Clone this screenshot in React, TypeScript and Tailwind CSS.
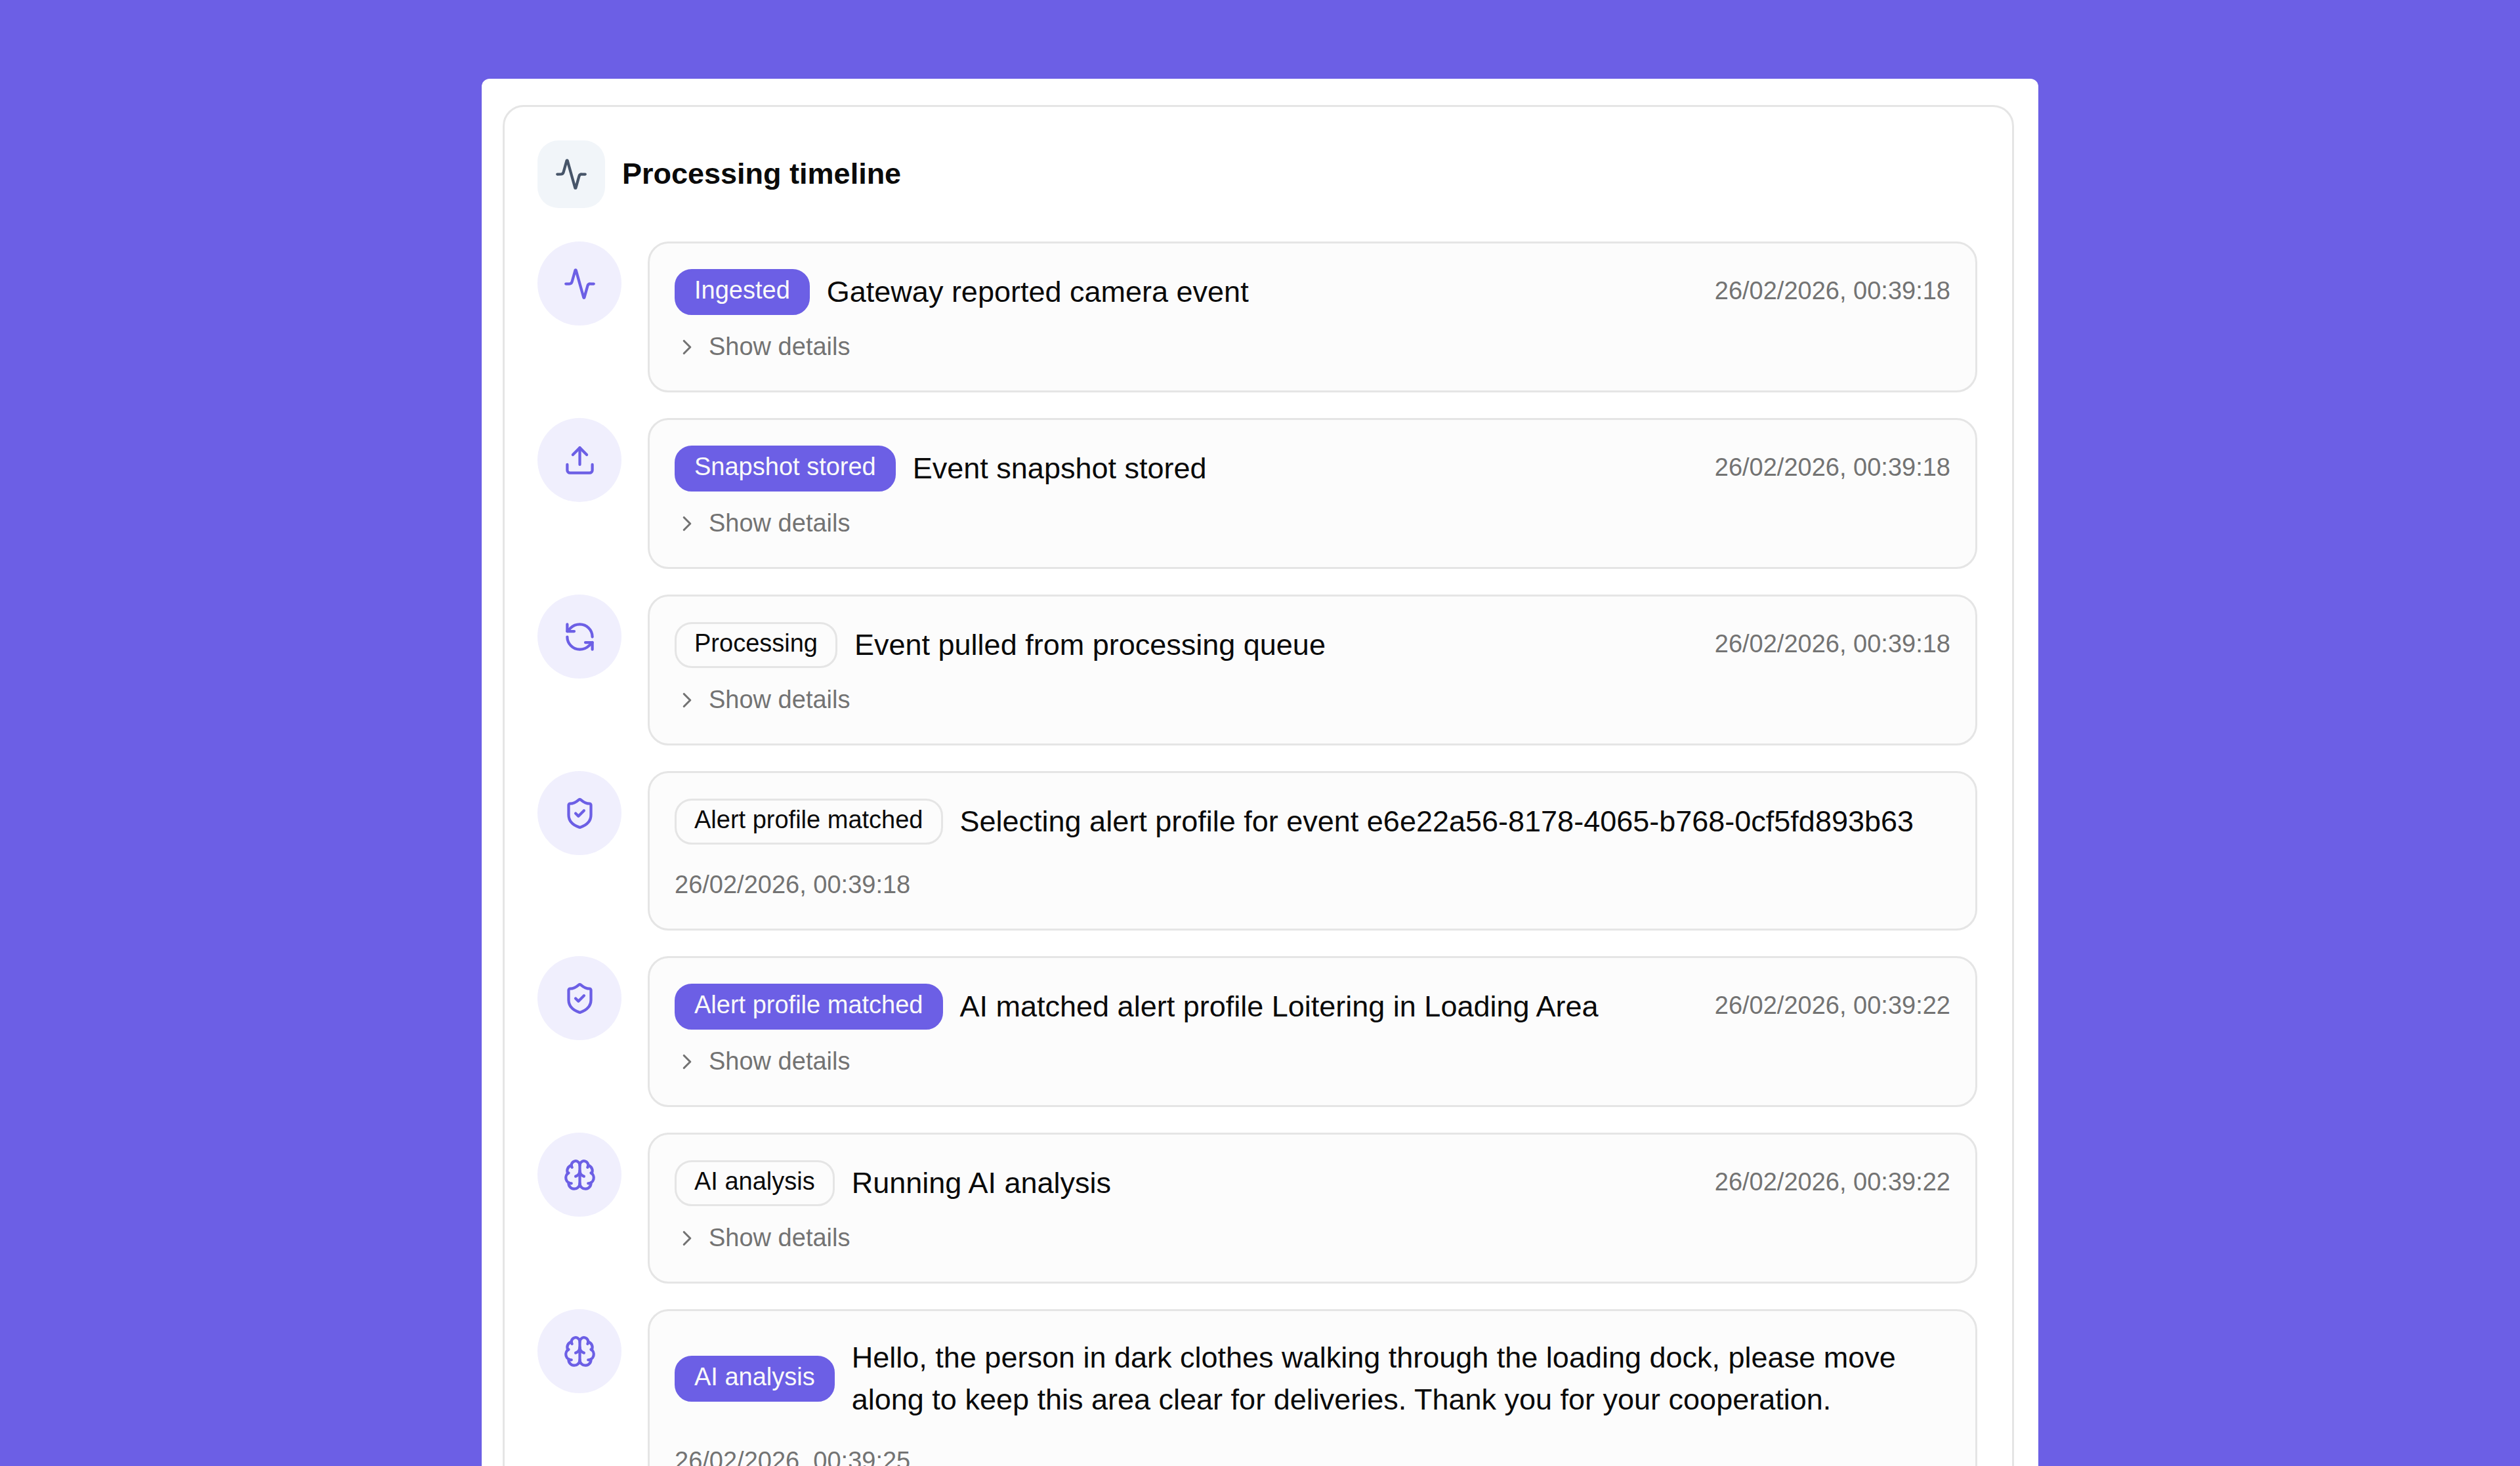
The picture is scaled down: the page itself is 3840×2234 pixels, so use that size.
import { Activity, Brain, ChevronRight, RefreshCcw, ShieldCheck, Upload, type LucideIcon } from 'lucide-react';
import clsx from 'clsx';

type TimelineEvent = {
  icon: LucideIcon;
  stage: string;
  done: boolean;
  message: string;
  timestamp: string;
  hasDetails: boolean;
};

const events: TimelineEvent[] = [
  {
    icon: Activity,
    stage: 'Ingested',
    done: true,
    message: 'Gateway reported camera event',
    timestamp: '26/02/2026, 00:39:18',
    hasDetails: true,
  },
  {
    icon: Upload,
    stage: 'Snapshot stored',
    done: true,
    message: 'Event snapshot stored',
    timestamp: '26/02/2026, 00:39:18',
    hasDetails: true,
  },
  {
    icon: RefreshCcw,
    stage: 'Processing',
    done: false,
    message: 'Event pulled from processing queue',
    timestamp: '26/02/2026, 00:39:18',
    hasDetails: true,
  },
  {
    icon: ShieldCheck,
    stage: 'Alert profile matched',
    done: false,
    message: 'Selecting alert profile for event e6e22a56-8178-4065-b768-0cf5fd893b63',
    timestamp: '26/02/2026, 00:39:18',
    hasDetails: false,
  },
  {
    icon: ShieldCheck,
    stage: 'Alert profile matched',
    done: true,
    message: 'AI matched alert profile Loitering in Loading Area',
    timestamp: '26/02/2026, 00:39:22',
    hasDetails: true,
  },
  {
    icon: Brain,
    stage: 'AI analysis',
    done: false,
    message: 'Running AI analysis',
    timestamp: '26/02/2026, 00:39:22',
    hasDetails: true,
  },
  {
    icon: Brain,
    stage: 'AI analysis',
    done: true,
    message:
      'Hello, the person in dark clothes walking through the loading dock, please move along to keep this area clear for deliveries. Thank you for your cooperation.',
    timestamp: '26/02/2026, 00:39:25',
    hasDetails: false,
  },
];

function StageBadge({ label, done }: { label: string; done: boolean }) {
  return (
    <span
      className={clsx(
        'shrink-0 whitespace-nowrap rounded-[26px] border-3 px-[27px] pt-1 pb-[9px] text-[38px] leading-[51px]',
        done ? 'border-[#6c5fe5] bg-[#6c5fe5] text-[#fafafa]' : 'border-[#e5e5e5] text-[#0a0a0a]'
      )}
    >
      {label}
    </span>
  );
}

function TimelineItem({ event }: { event: TimelineEvent }) {
  const Icon = event.icon;

  return (
    <li className="flex items-start gap-10">
      <div className="flex size-32 shrink-0 items-center justify-center rounded-full bg-[#f0effd] text-[#6c5fe5]">
        <Icon className="size-[51px]" />
      </div>

      <div className="min-w-0 flex-1 rounded-[32px] border-3 border-[#e5e5e5] bg-[#fcfcfc] px-[38px] py-[39px]">
        <div className="flex flex-wrap items-center justify-between gap-[38px]">
          <div className="flex items-center gap-[26px]">
            <StageBadge label={event.stage} done={event.done} />
            <p className="text-[45px] leading-[64px] text-[#0a0a0a]">{event.message}</p>
          </div>
          <time className="pb-1 text-[38px] leading-[47px] text-[#737373]">{event.timestamp}</time>
        </div>

        {event.hasDetails && (
          <button
            type="button"
            className="mt-[23px] mb-0.5 flex cursor-pointer items-center gap-[14px] text-[38px] leading-[51px] text-[#737373]"
          >
            <ChevronRight className="size-[38px]" />
            Show details
          </button>
        )}
      </div>
    </li>
  );
}

export default function App() {
  return (
    <main className="h-screen overflow-hidden bg-[#6c5fe5] pt-[120px] font-['Liberation_Sans',Arial,sans-serif]">
      <div className="mx-auto max-w-[2372px] rounded-xl bg-white pt-10 pr-[37px] pb-10 pl-8">
        <section className="rounded-[32px] border-3 border-[#e5e5e5] py-[51px] pr-[53px] pl-[50px]">
          <header className="mb-[51px] flex items-center gap-[26px]">
            <div className="flex size-[103px] items-center justify-center rounded-[32px] bg-[#f1f5f9] text-[#475569]">
              <Activity className="size-[51px]" />
            </div>
            <h2 className="pb-0.5 text-[45px] leading-[64px] font-bold text-[#0a0a0a]">Processing timeline</h2>
          </header>

          <ol className="flex flex-col gap-[39px]">
            {events.map((event, index) => (
              <TimelineItem key={index} event={event} />
            ))}
          </ol>
        </section>
      </div>
    </main>
  );
}
